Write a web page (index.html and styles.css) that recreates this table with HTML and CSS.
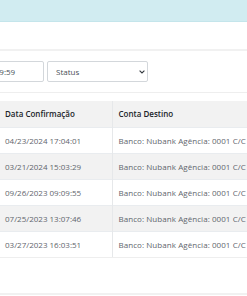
FILE: index.html
```html
<!DOCTYPE html>
<html lang="pt-BR">
<head>
    <meta charset="UTF-8">
    <title>Transferências</title>
    <link rel="stylesheet" href="styles.css">
</head>
<body>
    <div class="alert-info"></div>

    <div class="panel">
        <div class="filters">
            <input class="field date-end" type="text" value="12/31/2024 23:59:59">
            <div class="select-wrap">
                <select class="field status">
                    <option>Status</option>
                    <option>Confirmado</option>
                    <option>Pendente</option>
                </select>
                <svg class="chevron" width="6" height="4" viewBox="0 0 6 4">
                    <path d="M0.6 0.6 L3 3 L5.4 0.6" fill="none" stroke="#343a40" stroke-width="1.1"/>
                </svg>
            </div>
        </div>

        <table class="transfers">
            <thead>
                <tr>
                    <th class="col-date">Data Confirmação</th>
                    <th>Conta Destino</th>
                </tr>
            </thead>
            <tbody>
                <tr>
                    <td class="col-date">04/23/2024 17:04:01</td>
                    <td class="col-account">Banco: Nubank Agência: 0001 C/C</td>
                </tr>
                <tr>
                    <td class="col-date">03/21/2024 15:03:29</td>
                    <td class="col-account">Banco: Nubank Agência: 0001 C/C</td>
                </tr>
                <tr>
                    <td class="col-date">09/26/2023 09:09:55</td>
                    <td class="col-account">Banco: Nubank Agência: 0001 C/C</td>
                </tr>
                <tr>
                    <td class="col-date">07/25/2023 13:07:46</td>
                    <td class="col-account">Banco: Nubank Agência: 0001 C/C</td>
                </tr>
                <tr>
                    <td class="col-date">03/27/2023 16:03:51</td>
                    <td class="col-account">Banco: Nubank Agência: 0001 C/C</td>
                </tr>
            </tbody>
        </table>

        <div class="panel-footer"></div>
    </div>
</body>
</html>
```

FILE: styles.css
```css
/* styles.css */

body {
    margin: 0;
    background-color: #fff;
    font-family: 'Open Sans', 'Noto Sans', sans-serif;
    font-size: 8px;
    color: #212529;
    overflow: hidden;
}

.alert-info {
    height: 21px;
    background-color: #d1ecf1;
    border-bottom: 1px solid #c4e5eb;
}

.panel {
    margin-top: 27px;
    width: 600px;
}

.filters {
    display: flex;
    gap: 3px;
    padding: 10px 0;
    border-top: 2px solid #f1f1f1;
    border-bottom: 1px solid #eeeeee;
    margin-left: -70px;
}

.field {
    height: 21px;
    box-sizing: border-box;
    border: 1px solid #d3d7db;
    border-radius: 2px;
    background-color: #fff;
    font-family: inherit;
    font-size: 8px;
    color: #495057;
    padding: 0 8px;
    outline: none;
}

.date-end {
    width: 114px;
}

.select-wrap {
    position: relative;
}

.status {
    width: 101px;
    appearance: none;
    -webkit-appearance: none;
}

.chevron {
    position: absolute;
    right: 3px;
    top: 9px;
}

.transfers {
    margin-top: 8px;
    border-collapse: collapse;
    width: 600px;
}

.transfers th,
.transfers td {
    text-align: left;
    height: 26px;
    box-sizing: border-box;
    padding: 0 6px;
    white-space: nowrap;
    border-top: 1px solid #e9ecef;
}

.transfers th {
    font-weight: 600;
    color: #212529;
    background-color: #f2f2f2;
    border-top: none;
}

.transfers td {
    color: #5f666d;
}

.transfers .col-date {
    width: 112px;
    box-sizing: border-box;
    padding-left: 5px;
    border-right: 1px solid #e6e8ea;
}

.transfers .col-account {
    letter-spacing: 0.06px;
}

.transfers tbody tr:nth-child(even) td {
    background-color: #f2f2f2;
}

.transfers tbody tr:last-child td {
    border-bottom: 1px solid #eeeeee;
}

.panel-footer {
    margin-top: 35px;
    border-top: 2px solid #f1f1f1;
}
```
